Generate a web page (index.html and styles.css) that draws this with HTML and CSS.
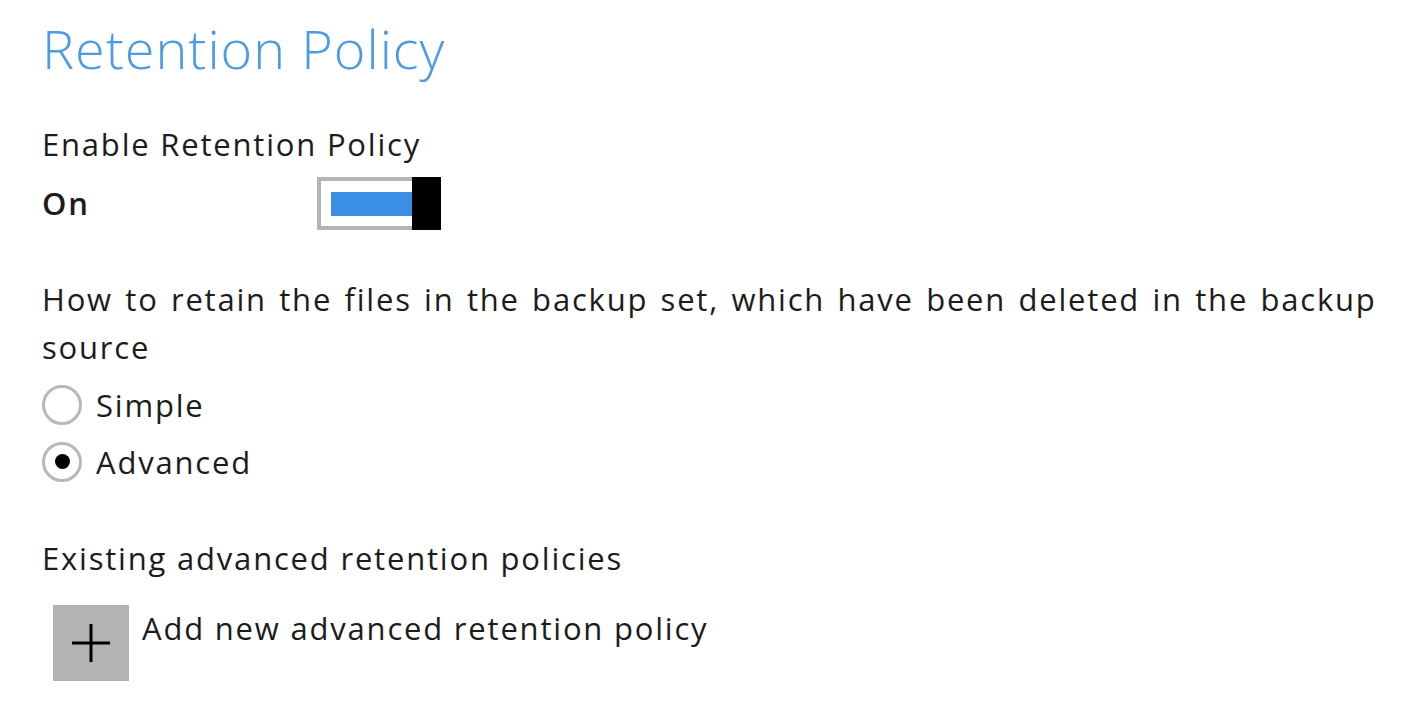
FILE: index.html
```html
<!DOCTYPE html>
<html>
<head>
<meta charset="utf-8">
<link rel="stylesheet" href="styles.css">
</head>
<body>
<div class="page">
  <h1 class="title">Retention Policy</h1>
  <div class="label enable">Enable Retention Policy</div>
  <div class="toggle-row">
    <span class="state">On</span>
    <div class="toggle"><div class="track"></div><div class="knob"></div></div>
  </div>
  <p class="question">How to retain the files in the backup set, which have been deleted in the backup source</p>
  <div class="radio-row first"><span class="radio"></span><span class="rlabel">Simple</span></div>
  <div class="radio-row"><span class="radio checked"></span><span class="rlabel">Advanced</span></div>
  <div class="label existing">Existing advanced retention policies</div>
  <div class="add-row">
    <div class="add-btn">
      <svg width="40" height="40" viewBox="0 0 40 40"><path d="M20 1V39M1 20H39" stroke="#000" stroke-width="3" fill="none"/></svg>
    </div>
    <span class="add-label">Add new advanced retention policy</span>
  </div>
</div>
</body>
</html>
```

FILE: styles.css
```css
html, body { margin: 0; padding: 0; background: #fff; }
body { font-family: "Open Sans", "Noto Sans", sans-serif; color: #1c1c1c; }
.page { padding: 13px 20px 0 42px; width: 1345px; }
.title { margin: 0; font-size: 54px; font-weight: 300; color: #4a9be6; line-height: 70px; letter-spacing: 1px; }
.label, .question, .rlabel, .add-label, .state { font-size: 31px; letter-spacing: 1.8px; }
.label { line-height: 40px; }
.enable { margin-top: 41px; }
.toggle-row { display: flex; align-items: center; height: 60px; margin-top: 9px; }
.state { font-weight: 600; width: 275px; }
.toggle { display: flex; width: 124px; height: 53px; box-sizing: border-box; border: 4px solid #b4b4b4; border-right: none; background: #fff; }
.track { flex: 1; margin: 11px 0 10px 10px; background: #3a8fe4; }
.knob { width: 29px; margin: -4px 0; background: #000; }
.question { margin: 42px 0 0; line-height: 48px; word-spacing: 2.5px; }
.radio-row { display: flex; align-items: center; height: 57px; }
.radio-row.first { margin-top: 5px; }
.radio { width: 40px; height: 40px; box-sizing: border-box; border: 3px solid #b8b8b8; border-radius: 50%; display: flex; align-items: center; justify-content: center; margin-right: 14px; }
.radio.checked::after { content: ""; width: 15px; height: 15px; border-radius: 50%; background: #000; }
.existing { margin-top: 48px; }
.add-row { display: flex; align-items: flex-start; margin-top: 27px; margin-left: 11px; }
.add-btn { width: 76px; height: 76px; background: #b3b3b3; display: flex; align-items: center; justify-content: center; }
.add-label { line-height: 40px; margin-left: 13px; margin-top: 3px; }
```
